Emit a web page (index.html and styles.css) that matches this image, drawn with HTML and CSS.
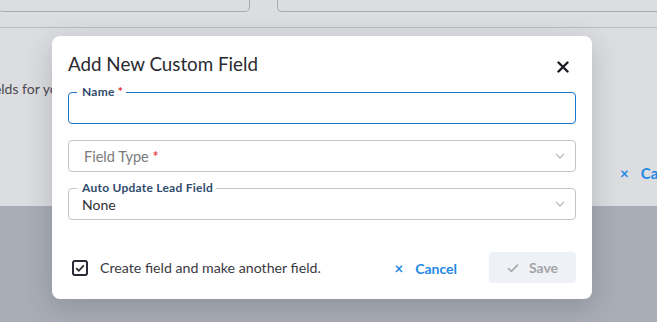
FILE: index.html
```html
<!DOCTYPE html>
<html>
<head>
<meta charset="utf-8">
<link rel="stylesheet" href="styles.css">
</head>
<body>
<div class="page">
  <div class="panel">
    <div class="topbar">
      <div class="card card-a"></div>
      <div class="card card-b"></div>
    </div>
    <p class="desc">Create custom fields for your leads and contacts.</p>
    <div class="bg-actions">
      <span class="bg-x">×</span><span class="bg-cancel">Cancel</span>
    </div>
  </div>
  <div class="below"></div>
</div>

<div class="modal">
  <div class="head">
    <h2 class="title">Add New Custom Field</h2>
    <svg class="close" width="12" height="12" viewBox="0 0 12 12"><path d="M1.5 1.5 L10.5 10.5 M10.5 1.5 L1.5 10.5" stroke="#1c1c28" stroke-width="2.4" stroke-linecap="round"/></svg>
  </div>
  <div class="fields">
    <div class="field focused">
      <span class="label">Name <span class="req">*</span></span>
    </div>
    <div class="field">
      <span class="placeholder">Field Type <span class="req">*</span></span>
      <svg class="chev" width="10" height="6" viewBox="0 0 10 6"><path d="M1 1 L5 5 L9 1" fill="none" stroke="#b8b8b8" stroke-width="1.2"/></svg>
    </div>
    <div class="field">
      <span class="label">Auto Update Lead Field</span>
      <span class="value">None</span>
      <svg class="chev" width="10" height="6" viewBox="0 0 10 6"><path d="M1 1 L5 5 L9 1" fill="none" stroke="#b8b8b8" stroke-width="1.2"/></svg>
    </div>
  </div>
  <div class="footer">
    <label class="check">
      <svg class="box" width="16" height="16" viewBox="0 0 16 16"><rect x="1" y="1" width="14" height="14" rx="2" fill="none" stroke="#2a2a35" stroke-width="2"/><path d="M4.2 8.2 L6.8 10.8 L11.8 5.4" fill="none" stroke="#2a2a35" stroke-width="1.8"/></svg>
      <span>Create field and make another field.</span>
    </label>
    <div class="btns">
      <span class="cancel"><span class="cx">×</span>Cancel</span>
      <span class="save">
        <svg width="12" height="10" viewBox="0 0 12 10"><path d="M1 5.2 L4.3 8.4 L11 1.6" fill="none" stroke="#a8a8a8" stroke-width="1.6"/></svg>
        Save
      </span>
    </div>
  </div>
</div>
</body>
</html>
```
FILE: styles.css
```css
html, body {
  margin: 0;
  padding: 0;
  width: 657px;
  height: 322px;
  overflow: hidden;
  font-family: "Lato", "Noto Sans", sans-serif;
}
.page {
  width: 657px;
  height: 322px;
  display: flex;
  flex-direction: column;
}
.panel {
  height: 206px;
  background: #dcdde0;
  overflow: hidden;
}
.topbar {
  height: 28px;
  border-bottom: 1px solid #b9bbc0;
  display: flex;
  gap: 27px;
  box-sizing: border-box;
}
.card {
  height: 12px;
  border: 1px solid #a9abb1;
  border-top: none;
  border-radius: 0 0 5px 5px;
  box-sizing: border-box;
}
.card-a {
  width: 252px;
  margin-left: -2px;
}
.card-b {
  flex: 1;
  margin-right: -4px;
}
.desc {
  margin: 52px 0 0;
  text-indent: -107px;
  font-size: 14px;
  color: #4a4a50;
  white-space: nowrap;
}
.bg-actions {
  margin-top: 67px;
  padding-left: 620px;
  white-space: nowrap;
  color: #1e88e5;
  font-size: 15px;
  font-weight: 700;
}
.bg-x {
  margin-right: 12px;
}
.below {
  flex: 1;
  background: #a9adb6;
}

.modal {
  position: absolute;
  left: 52px;
  top: 36px;
  width: 540px;
  height: 263px;
  box-sizing: border-box;
  padding: 16px;
  background: #fff;
  border-radius: 8px;
  box-shadow: 0 8px 28px rgba(40, 44, 55, 0.22);
  display: flex;
  flex-direction: column;
}
.head {
  height: 24px;
  display: flex;
  align-items: center;
  justify-content: space-between;
}
.title {
  margin: 0;
  font-size: 18.8px;
  font-weight: 400;
  line-height: 24px;
  color: #2a2a30;
}
.close {
  margin-right: 7px;
  margin-top: 6px;
}
.fields {
  margin-top: 16px;
  display: flex;
  flex-direction: column;
  gap: 16px;
}
.field {
  position: relative;
  height: 32px;
  box-sizing: border-box;
  border: 1px solid #c4c4c4;
  border-radius: 4px;
  display: flex;
  align-items: center;
  padding: 0 13px;
}
.field.focused {
  border-color: #1a73c8;
}
.label {
  position: absolute;
  top: -8px;
  left: 8px;
  padding: 0 3px 0 5px;
  background: #fff;
  font-size: 12px;
  letter-spacing: 0.25px;
  line-height: 13px;
  font-weight: 700;
  color: #2f4b6c;
}
.req {
  color: #e02020;
}
.placeholder {
  font-size: 14.5px;
  color: #7a7a7a;
  padding-left: 2px;
}
.value {
  font-size: 14px;
  color: #2f2f35;
  margin-top: 0;
}
.chev {
  margin-left: auto;
  margin-right: -3px;
}
.footer {
  margin-top: auto;
  display: flex;
  align-items: center;
  justify-content: space-between;
}
.check {
  display: flex;
  align-items: center;
  gap: 12px;
  padding-left: 4px;
  font-size: 14.2px;
  color: #3a3a42;
}
.btns {
  display: flex;
  align-items: center;
  gap: 32px;
}
.cancel {
  color: #1e88e5;
  font-weight: 700;
  font-size: 14px;
}
.cx {
  font-size: 15px;
  margin-right: 12px;
}
.save {
  width: 87px;
  height: 31px;
  box-sizing: border-box;
  border-radius: 4px;
  background: #eef2f6;
  color: #a4a4a8;
  font-weight: 700;
  font-size: 14px;
  display: flex;
  align-items: center;
  justify-content: center;
  gap: 10px;
}
```
